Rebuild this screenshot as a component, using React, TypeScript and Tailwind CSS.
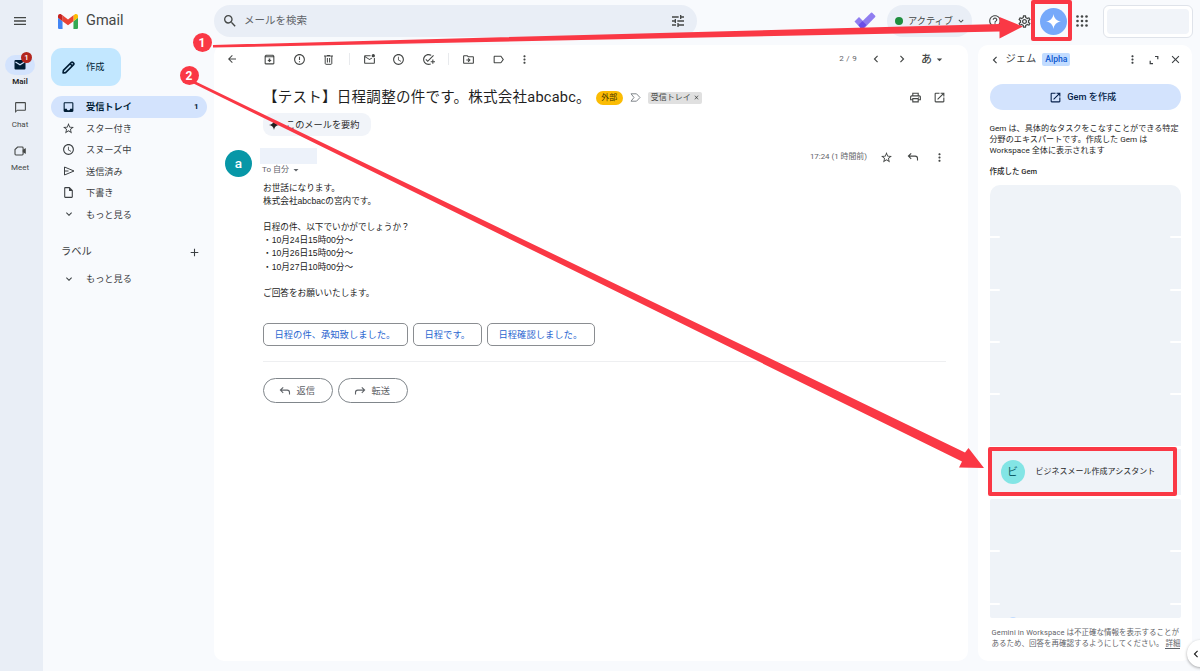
import type { ReactNode } from "react";
import type { IconType } from "react-icons";
import {
  MdAccessTime,
  MdAdd,
  MdArrowBack,
  MdArrowDropDown,
  MdChevronLeft,
  MdChevronRight,
  MdClose,
  MdErrorOutline,
  MdExpandMore,
  MdHelpOutline,
  MdInbox,
  MdMenu,
  MdMoreVert,
  MdOpenInNew,
  MdOutlineAddTask,
  MdOutlineArchive,
  MdOutlineChatBubbleOutline,
  MdOutlineDriveFileMove,
  MdOutlineInsertDriveFile,
  MdOutlineLabel,
  MdOutlineMarkEmailUnread,
  MdOutlinePrint,
  MdOutlineSettings,
  MdSearch,
  MdStarBorder,
  MdTune,
} from "react-icons/md";

const BODY_LINES = [
  "お世話になります。",
  "株式会社abcbacの宮内です。",
  "",
  "日程の件、以下でいかがでしょうか？",
  "・10月24日15時00分〜",
  "・10月26日15時00分〜",
  "・10月27日10時00分〜",
  "",
  "ご回答をお願いいたします。",
];

function GmailLogo() {
  return (
    <svg viewBox="52 42 88 66" className="h-[15px] w-5">
      <path fill="#4285f4" d="M58 108h14V74L52 59v43c0 3.32 2.69 6 6 6" />
      <path fill="#34a853" d="M120 108h14c3.32 0 6-2.69 6-6V59l-20 15" />
      <path fill="#fbbc04" d="M120 48v26l20-15v-8c0-7.42-8.47-11.65-14.4-7.2" />
      <path fill="#ea4335" d="M72 74V48l24 18 24-18v26L96 92" />
      <path fill="#c5221f" d="M52 51v8l20 15V48l-5.6-4.2c-5.94-4.45-14.4-.22-14.4 7.2" />
    </svg>
  );
}

function ReplyIcon({ flip = false }: { flip?: boolean }) {
  return (
    <svg viewBox="0 0 12 12" className={flip ? "size-3 -scale-x-100" : "size-3"} fill="none" stroke="currentColor" strokeWidth="1.1">
      <path d="M4.2 2.3 1.4 5.1l2.8 2.8M1.6 5.1h6.6c1.4 0 2.3.9 2.3 2.3v2.2" />
    </svg>
  );
}

function SendIcon() {
  return (
    <svg viewBox="0 0 12 12" className="size-3" fill="none" stroke="currentColor" strokeWidth="1">
      <path d="M1.5 2v8L11 6zM1.5 6h4" />
    </svg>
  );
}

function TrashIcon({ className }: { className?: string }) {
  return (
    <svg viewBox="0 0 13 13" className={className} fill="none" stroke="currentColor" strokeWidth="1">
      <path d="M2 3h9M5 2.500h3M3.200 3v7.500c0 .4.300.8.800.8h5c.5 0 .8-.4.8-.8V3M5.400 5v4.500M7.600 5v4.500" />
    </svg>
  );
}

function AppsIcon() {
  return (
    <svg viewBox="0 0 12 12" className="ml-[9px] size-3" fill="currentColor">
      {[1.5, 6, 10.5].map((cy) => [1.5, 6, 10.5].map((cx) => <circle key={`${cx}-${cy}`} cx={cx} cy={cy} r="1.3" />))}
    </svg>
  );
}

function Spark({ className }: { className: string }) {
  return (
    <svg viewBox="0 0 24 24" className={className} fill="currentColor">
      <path d="M12 0c.9 6.800 5.200 11.100 12 12-6.800.9-11.100 5.200-12 12-.9-6.800-5.200-11.100-12-12C6.800 11.100 11.100 6.800 12 0z" />
    </svg>
  );
}

function MailIcon() {
  return (
    <svg viewBox="0 0 12 10" className="h-[10px] w-3">
      <rect x="0.5" width="11" height="9.500" rx="1" fill="#001d35" />
      <path d="m1.500 2 4.500 2.800L10.500 2" fill="none" stroke="#d3e3fd" strokeWidth="1.100" />
    </svg>
  );
}

function MeetIcon() {
  return (
    <svg viewBox="0 0 12 12" className="size-3" fill="none" stroke="currentColor" strokeWidth="1.100">
      <path d="M3.600 2H8.200c.6 0 .9.4.9.9v6.200c0 .6-.4.9-.9.9H1.900c-.6 0-.9-.4-.9-.9V4.600z" />
      <path d="M9.300 5.300 11.200 4v4L9.300 6.700z" fill="currentColor" />
    </svg>
  );
}

function Rail() {
  return (
    <nav className="flex w-[43px] shrink-0 flex-col items-center bg-[#e9eef6] pr-[3px] text-[#444746]">
      <MdMenu className="mt-[13px] size-4" />
      <div className="relative mt-[26px] flex h-5 w-[30px] items-center justify-center rounded-full bg-[#d3e3fd]">
        <MailIcon />
        <span className="absolute -top-[3px] left-[16px] flex size-[11px] items-center justify-center rounded-full bg-[#b3261e] text-[8px] font-medium text-white">
          1
        </span>
      </div>
      <span className="mt-[1px] text-[8px] leading-[11px] font-semibold text-[#1f1f1f]">Mail</span>
      <MdOutlineChatBubbleOutline className="mt-[14px] size-[13px]" />
      <span className="mt-[5px] text-[8px] leading-[11px]">Chat</span>
      <div className="mt-[15px]">
        <MeetIcon />
      </div>
      <span className="mt-[5px] text-[8px] leading-[11px]">Meet</span>
    </nav>
  );
}

function NavRow({ icon, label, count }: { icon: ReactNode; label: string; count?: string }) {
  return (
    <div
      className={
        count
          ? "flex h-[21.500px] items-center rounded-full bg-[#d3e3fd] pr-2 pl-[11px] text-[#001d35]"
          : "flex h-[21.500px] items-center pr-2 pl-[11px] text-[#3c4043]"
      }
    >
      <span className="flex w-[13px] justify-center">{icon}</span>
      <span className={count ? "ml-[11px] text-[9.200px] font-bold" : "ml-[11px] text-[9.200px]"}>{label}</span>
      {count && <span className="ml-auto text-[8px] font-bold">{count}</span>}
    </div>
  );
}

function Sidebar() {
  return (
    <aside className="flex w-[171px] shrink-0 flex-col pr-[7.500px] pl-2">
      <div className="flex h-[43px] items-center gap-2 pl-[7px]">
        <GmailLogo />
        <span className="text-[14.500px] text-[#444746]">Gmail</span>
      </div>
      <div className="mt-[5px] flex h-[38px] w-[70px] items-center gap-[11px] rounded-[11px] bg-[#c2e7ff] pl-[11px] text-[#001d35]">
        <svg viewBox="0 0 12 12" className="size-[13px]" fill="none" stroke="currentColor" strokeWidth="1.500" strokeLinejoin="round">
          <path d="M1 11 1.300 8.700 8.700 1.300c.4-.4.9-.4 1.300 0l.7.7c.4.4.4.9 0 1.300L3.300 10.700zM7.500 2.500l2 2" />
        </svg>
        <span className="text-[9.200px]">作成</span>
      </div>
      <div className="mt-[10px]">
        <NavRow icon={<MdInbox className="size-[14px]" />} label="受信トレイ" count="1" />
        <NavRow icon={<MdStarBorder className="size-[13px]" />} label="スター付き" />
        <NavRow icon={<MdAccessTime className="size-[13px]" />} label="スヌーズ中" />
        <NavRow icon={<SendIcon />} label="送信済み" />
        <NavRow icon={<MdOutlineInsertDriveFile className="size-[13px]" />} label="下書き" />
        <NavRow icon={<MdExpandMore className="size-3" />} label="もっと見る" />
      </div>
      <div className="mt-[17px] flex h-[20px] items-center justify-between pr-[6px] pl-[10px] text-[#3c4043]">
        <span className="text-[10.300px]">ラベル</span>
        <MdAdd className="size-[13px]" />
      </div>
      <div className="mt-[6px]">
        <NavRow icon={<MdExpandMore className="size-3" />} label="もっと見る" />
      </div>
    </aside>
  );
}

function Header() {
  return (
    <header className="flex h-[45px] shrink-0 items-start pt-[5px] text-[#444746]">
      <div className="flex h-8 w-[483px] items-center rounded-full bg-[#e9eef6] pr-[11px] pl-2">
        <MdSearch className="size-4" />
        <span className="ml-[6px] text-[10.500px] text-[#5f6368]">メールを検索</span>
        <MdTune className="ml-auto size-4" />
      </div>
      <svg viewBox="0 0 22 18" className="mt-[7px] ml-[157px] h-[18px] w-[22px]">
        <path d="m.5 9.500 4.500-4.500 7.500 7.500-3 3.500q-1.500 1.200-3 0z" fill="#8f7df0" />
        <path d="M17 .8q.6-.5 1.200 0l3 3q.5.6 0 1.200L10.500 16q-1.500 1-3 0L5 12.500z" fill="#8f7df0" />
        <path d="m8.500 9 4 4-3 3q-1.500 1-3 0L4.500 13z" fill="#6a4de8" />
      </svg>
      <div className="ml-[11px] flex h-8 w-[85px] items-center rounded-full bg-[#e9eef6] pl-[8px]">
        <span className="size-[8px] rounded-full bg-[#1e8e3e]" />
        <span className="ml-[5px] text-[9.200px]">アクティブ</span>
        <MdExpandMore className="ml-[3px] size-[10px]" />
      </div>
      <div className="flex h-8 items-center">
        <MdHelpOutline className="ml-[16px] size-[14px]" />
        <MdOutlineSettings className="ml-[15px] size-[15px]" />
        <span className="ml-[8px] flex size-[27px] items-center justify-center rounded-full bg-[#76a9fa] text-white">
          <Spark className="size-[15px]" />
        </span>
        <AppsIcon />
      </div>
      <div className="ml-[15px] h-[33px] w-[90px] rounded-md border border-[#dfe3ea] bg-white p-[3px]">
        <div className="h-full rounded-sm bg-[#f1f4f9]" />
      </div>
    </header>
  );
}

function ToolCell({ Icon, size = "size-[13px]" }: { Icon: IconType; size?: string }) {
  return (
    <span className="flex w-[29.500px] justify-center">
      <Icon className={size} />
    </span>
  );
}

function Toolbar() {
  return (
    <div className="flex h-[28px] items-center text-[#444746]">
      <span className="ml-[3px] flex w-[38px]">
        <ToolCell Icon={MdArrowBack} size="size-3" />
      </span>
      <ToolCell Icon={MdOutlineArchive} />
      <ToolCell Icon={MdErrorOutline} />
      <span className="flex w-[29.500px] justify-center">
        <TrashIcon className="size-[13px]" />
      </span>
      <span className="mx-[5px] h-3 w-px bg-[#e8eaed]" />
      <ToolCell Icon={MdOutlineMarkEmailUnread} />
      <ToolCell Icon={MdAccessTime} />
      <ToolCell Icon={MdOutlineAddTask} />
      <span className="mx-[5px] h-3 w-px bg-[#e8eaed]" />
      <ToolCell Icon={MdOutlineDriveFileMove} />
      <ToolCell Icon={MdOutlineLabel} />
      <span className="-ml-[3px] flex">
        <ToolCell Icon={MdMoreVert} />
      </span>
      <span className="ml-auto text-[8px] tracking-[0.300px] text-[#5f6368]">2 / 9</span>
      <MdChevronLeft className="ml-[12px] size-[14px]" />
      <MdChevronRight className="ml-[12px] size-[14px]" />
      <span className="ml-[12px] text-[11px] font-medium">あ</span>
      <MdArrowDropDown className="mr-[22px] ml-[1px] size-[13px]" />
    </div>
  );
}

function SmartReply({ children, width }: { children: string; width: string }) {
  return (
    <span
      className={`flex h-[23px] items-center rounded-[5px] border border-[#8a8d91] pl-[11px] text-[9.300px] whitespace-nowrap text-[#2a66d0] ${width}`}
    >
      {children}
    </span>
  );
}

function Message() {
  return (
    <main className="flex w-[754px] shrink-0 flex-col rounded-[10px] bg-white">
      <Toolbar />
      <div className="mt-[12px] flex h-[25px] items-center pr-[22px] pl-[49px] text-[#444746]">
        <h1 className="pt-[2px] text-[14.550px] tracking-[0.220px] whitespace-nowrap text-[#1f1f1f]">
          【テスト】日程調整の件です。株式会社abcabc。
        </h1>
        <span className="ml-[5px] flex h-[14px] w-[27px] items-center justify-center rounded-full bg-[#fbbc04] text-[8px] text-[#3c3000]">
          外部
        </span>
        <svg viewBox="0 0 11 9" className="ml-[7px] h-[9px] w-[11px]" fill="none" stroke="#80868b">
          <path d="M1 .8h5.500L10 4.500 6.500 8.200H1l3-3.700z" />
        </svg>
        <span className="ml-[7px] flex h-[12px] w-[54px] items-center rounded-[2px] bg-[#e0e0e0] pl-[3px] text-[8px] whitespace-nowrap">
          受信トレイ
          <MdClose className="ml-[2px] size-[7px]" />
        </span>
        <MdOutlinePrint className="ml-auto size-[13px]" />
        <MdOpenInNew className="ml-[11px] size-[13px]" />
      </div>
      <div className="mt-[3px] ml-[49px] flex h-[23px] w-[108px] items-center rounded-[9px] bg-[#f1f4f9] pl-[6px] text-[9.200px] text-[#1f1f1f]">
        <Spark className="mr-[7px] size-[10px]" />
        このメールを要約
      </div>
      <div className="mt-[12px] flex h-[32px] pl-[11px]">
        <span className="mt-[2px] flex size-[27px] shrink-0 items-center justify-center rounded-full bg-[#0797a7] text-[13.500px] font-medium text-white">
          a
        </span>
        <div className="ml-[8px]">
          <div className="h-4 w-[57px] bg-[#edf2fa]" />
          <div className="ml-[2px] flex h-[11px] items-center text-[8px] text-[#5f6368]">
            To 自分
            <MdArrowDropDown className="ml-[1px] size-3" />
          </div>
        </div>
        <div className="ml-auto flex h-[18px] items-center pr-[22px] text-[#444746]">
          <span className="text-[7.900px] text-[#5f6368]">17:24 (1 時間前)</span>
          <MdStarBorder className="ml-[13px] size-[13px]" />
          <span className="mx-[14px]">
            <ReplyIcon />
          </span>
          <MdMoreVert className="size-[13px]" />
        </div>
      </div>
      <div className="mt-[2px] ml-[49px] font-['Liberation_Sans','Noto_Sans_CJK_JP',sans-serif] text-[8.650px] text-[#222]">
        {BODY_LINES.map((line, i) => (
          <p key={i} className="h-[13.100px] leading-[13.100px]">
            {line}
          </p>
        ))}
      </div>
      <div className="mt-[23.500px] ml-[48.500px] flex gap-[5px]">
        <SmartReply width="w-[145px]">日程の件、承知致しました。</SmartReply>
        <SmartReply width="w-[69px]">日程です。</SmartReply>
        <SmartReply width="w-[108px]">日程確認しました。</SmartReply>
      </div>
      <div className="mt-[15px] mr-[22px] ml-[49px] h-px bg-[#eeeff1]" />
      <div className="mt-4 ml-[48.500px] flex gap-[5px] text-[9.200px] text-[#5f6368]">
        <span className="flex h-[25px] w-[70px] items-center gap-[6px] rounded-full border border-[#80868b] pl-[15px]">
          <ReplyIcon />
          返信
        </span>
        <span className="flex h-[25px] w-[70px] items-center gap-[6px] rounded-full border border-[#80868b] pl-[15px]">
          <ReplyIcon flip />
          転送
        </span>
      </div>
    </main>
  );
}

// Thin breaks at both edges separate neighbouring blank rows.
function Notches() {
  return (
    <div className="flex h-[2px] justify-between">
      <span className="w-[10px] rounded-r-full bg-white" />
      <span className="w-[11px] rounded-l-full bg-white" />
    </div>
  );
}

function GemPanel() {
  return (
    <section className="ml-[10px] flex w-[214px] shrink-0 flex-col rounded-[10px] bg-white pr-[11px] pl-[11.500px] text-[#1f1f1f]">
      <div className="flex h-[29px] items-center text-[#3c4043]">
        <MdChevronLeft className="-ml-[2px] size-[14px]" />
        <span className="ml-[4px] text-[10.300px]">ジェム</span>
        <span className="ml-[6px] flex h-[13px] w-[28px] items-center justify-center rounded-[2px] bg-[#c2dcff] text-[8.600px] font-medium text-[#0b57d0]">
          Alpha
        </span>
        <MdMoreVert className="ml-auto size-[13px]" />
        <svg viewBox="0 0 10 10" className="ml-[10px] size-[10px]" fill="none" stroke="currentColor" strokeWidth="1.200">
          <path d="M6 1.500h2.800v2.800M1.200 5.800v2.800H4" />
        </svg>
        <MdClose className="-mr-[1px] ml-[10px] size-[13px]" />
      </div>
      <div className="mt-[10px] flex h-[26px] items-center justify-center gap-[5px] rounded-full bg-[#d3e3fd] pr-[5px] text-[9.200px] font-medium text-[#041e49]">
        <MdOpenInNew className="size-[13px]" />
        Gem を作成
      </div>
      <p className="mt-[13px] text-[8.120px] leading-[10.800px] whitespace-nowrap">
        Gem は、具体的なタスクをこなすことができる特定
        <br />
        分野のエキスパートです。作成した Gem は
        <br />
        Workspace 全体に表示されます
      </p>
      <p className="mt-[12px] text-[7.500px] leading-[10px] font-medium">作成した Gem</p>
      <div className="mt-[8px] h-[261px] rounded-t-[10px] bg-[#eff3f8]">
        {[0, 1, 2, 3].map((row) => (
          <div key={row} className="h-[52.200px] pt-[51px]">
            <Notches />
          </div>
        ))}
      </div>
      <div className="mt-[3px] flex h-[46px] items-center bg-[#eff3f8] pl-[11px]">
        <span className="flex size-6 items-center justify-center rounded-full bg-[#83e5e5] text-[11px] text-[#0d5b66]">
          ビ
        </span>
        <span className="ml-[11px] text-[8px] whitespace-nowrap">ビジネスメール作成アシスタント</span>
      </div>
      <div className="mt-[4px] h-[119px] overflow-hidden rounded-[2px] bg-[#eff3f8]">
        {[0, 1].map((row) => (
          <div key={row} className="h-[52.500px] pt-[51px]">
            <Notches />
          </div>
        ))}
        <div className="mt-[12.500px] ml-[18px] h-3 w-[10px] rounded-t-full bg-[#c2dcff]" />
      </div>
      <p className="mt-[10px] pl-[2px] text-[7.500px] leading-[10.800px] whitespace-nowrap text-[#5f6368]">
        <span className="tracking-[0.150px]">Gemini in Workspace</span> は不正確な情報を表示することが
        <br />
        あるため、回答を再確認するようにしてください。 <span className="border-b border-[#5f6368]">詳細</span>
      </p>
    </section>
  );
}

// Numbered steps: open Gemini from the header, then pick the Gem in the list.
function Annotations() {
  return (
    <div className="pointer-events-none absolute inset-0">
      <svg viewBox="0 0 1200 671" className="absolute inset-0 h-full w-full" fill="#fa3845">
        <path d="M213 45 999.500 24v-7L1023 26.500 999.500 38.500v-7L213 47.500z" />
        <path d="M194.500 81 965 452.500l3.500-4.500L984 468l-25-.5 3-6L193.500 83.500z" />
      </svg>
      <span className="absolute top-[33px] left-[192.500px] flex size-[19px] items-center justify-center rounded-full bg-[#fa3845] text-[12px] font-bold text-white">
        1
      </span>
      <span className="absolute top-[66px] left-[179.500px] flex size-[19px] items-center justify-center rounded-full bg-[#fa3845] text-[12px] font-bold text-white">
        2
      </span>
      <div className="absolute top-0 left-[1031px] h-[41px] w-[41px] rounded-[2px] border-4 border-[#fa3845]" />
      <div className="absolute top-[447px] left-[988px] h-[49px] w-[189px] rounded-[2px] border-4 border-[#fa3845]" />
    </div>
  );
}

export default function App() {
  return (
    <div className="relative flex h-[671px] w-[1200px] overflow-hidden bg-[#f8fafd] font-['Roboto','Noto_Sans_CJK_JP',sans-serif] leading-none">
      <Rail />
      <Sidebar />
      <div className="flex min-w-0 flex-1 flex-col pb-[10px]">
        <Header />
        <div className="flex min-h-0 flex-1">
          <Message />
          <GemPanel />
        </div>
      </div>
      <div className="absolute top-[640px] left-[1187px] flex size-[27px] items-center rounded-full bg-white pl-[2px] text-[#1f1f1f] shadow-[0_1px_3px_rgba(0,0,0,0.35)]">
        <MdChevronLeft className="size-[14px]" />
      </div>
      <Annotations />
    </div>
  );
}
